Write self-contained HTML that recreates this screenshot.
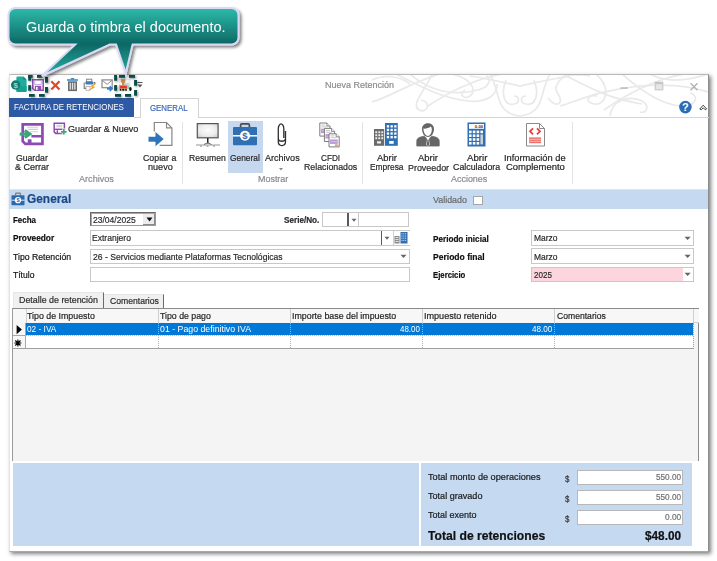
<!DOCTYPE html>
<html><head><meta charset="utf-8"><style>
html,body{margin:0;padding:0;}
body{width:717px;height:561px;position:relative;overflow:hidden;background:#fff;font-family:"Liberation Sans", sans-serif;}
.t{position:absolute;white-space:nowrap;line-height:1;transform-origin:0 0;-webkit-text-stroke:0.2px currentColor;}
svg{overflow:visible;}
</style></head><body>
<div style="position:absolute;left:9px;top:74px;width:700px;height:478px;background:#fff;box-shadow:2px 2px 4px rgba(0,0,0,.5);"></div>
<div style="position:absolute;left:9px;top:74px;width:700px;height:478px;border:1px solid #e4e4e4;border-top-color:#b8b8b8;border-right-color:#8c8c8c;border-bottom-color:#a8a8a8;box-sizing:border-box;"></div>
<div style="position:absolute;left:366px;top:75px;width:342px;height:42px;overflow:hidden;">
<svg style="position:absolute;left:-366px;top:-75px;" width="717" height="120" viewBox="0 0 717 120"><g fill="none" stroke="#e9e9e9" stroke-width="1.7"><path d="M372 102 C392 96 412 82 440 74"/><path d="M396 74 C420 86 440 98 468 101 C488 103 498 94 497 84"/><path d="M432 74 C426 90 410 104 419 110 C428 114 431 101 421 100"/><path d="M410 74 C430 92 455 96 478 90 C490 87 492 78 486 76"/><path d="M452 74 C470 78 478 90 470 96 C464 100 458 94 465 90"/><path d="M490 74 C501 92 494 113 520 116 C546 113 539 92 550 74"/><path d="M506 80 C500 95 505 106 514 104 C520 103 520 96 514 96"/><path d="M534 80 C540 95 535 106 526 104 C520 103 520 96 526 96"/><path d="M470 76 C495 80 510 84 520 86 C530 84 545 80 570 76"/><path d="M548 98 C556 108 562 104 560 98 C558 92 552 90 560 80 C566 74 580 74 590 76"/><path d="M560 106 C580 100 600 90 640 86 C665 84 690 86 708 92"/><path d="M596 74 C612 88 606 106 594 104 C584 102 588 94 597 96"/><path d="M622 74 C640 90 660 104 680 106 C696 107 700 96 690 93"/><path d="M650 74 C668 84 690 80 708 74"/><path d="M610 116 C612 100 628 96 640 100 C650 104 648 114 640 112"/><path d="M428 106 C446 94 470 80 502 74"/><path d="M562 74 C584 84 604 98 642 104"/><path d="M604 110 C624 96 652 80 684 74"/><path d="M372 80 C385 74 400 76 410 84"/></g></svg>
</div>
<svg style="position:absolute;left:10px;top:75px;" width="20" height="20" viewBox="0 0 20 20"><path d="M7.6 1.5h5.8l3.2 3.3v11a1.2 1.2 0 0 1-1.2 1.2H7.6a1.2 1.2 0 0 1-1.2-1.2V2.7a1.2 1.2 0 0 1 1.2-1.2z" fill="#1fac9c"/><path d="M6.4 11.2h10.2v4.6a1.2 1.2 0 0 1-1.2 1.2H7.6a1.2 1.2 0 0 1-1.2-1.2z" fill="#14a393"/><path d="M13.4 1.5v3.3h3.2z" fill="#0f8c7f"/><circle cx="5.65" cy="10" r="4.7" fill="#0f7d73"/><text x="5.65" y="12.9" font-size="8" font-weight="700" font-family="Liberation Sans" fill="#9ad6ce" text-anchor="middle">$</text></svg>
<svg style="position:absolute;left:32px;top:79px;" width="12" height="12" viewBox="0 0 12 12"><path d="M0.8 0.8h10.4v10.4H2.5L0.8 9.5z" fill="none" stroke="#8f52b5" stroke-width="1.6"/><rect x="2.8" y="1.6" width="6.4" height="3.8" fill="#fff" stroke="#b996cf" stroke-width=".8"/><rect x="2.8" y="6.8" width="6.5" height="4.2" fill="#8f52b5"/><rect x="4" y="8" width="1.6" height="2.8" fill="#fff"/></svg>
<svg style="position:absolute;left:50px;top:80px;" width="11" height="11" viewBox="0 0 11 11"><path d="M1.3 1.3L9.5 9.5M9.5 1.3L1.3 9.5" stroke="#dc4a2c" stroke-width="2.2"/></svg>
<svg style="position:absolute;left:66px;top:78px;" width="13" height="14" viewBox="0 0 13 14"><rect x="1" y="1.2" width="11" height="1.6" fill="#3d8fd1"/><rect x="4.8" y="0" width="3.4" height="1.6" fill="#3d8fd1"/><rect x="2" y="3.3" width="9" height="9.8" fill="#6b6b6b"/><rect x="3.6" y="4.8" width="1.3" height="6.8" fill="#e0e0e0"/><rect x="5.9" y="4.8" width="1.3" height="6.8" fill="#e0e0e0"/><rect x="8.2" y="4.8" width="1.3" height="6.8" fill="#e0e0e0"/></svg>
<svg style="position:absolute;left:83px;top:78px;" width="15" height="14" viewBox="0 0 15 14"><rect x="3.6" y="1.2" width="5.2" height="2.6" fill="#fff" stroke="#7a7a7a" stroke-width=".9"/><path d="M1.2 4.6V10.4H3.2M10.6 4.6H11.8V6.5" fill="none" stroke="#7a7a7a" stroke-width="1.1"/><rect x="2.4" y="3.4" width="8" height="3.1" rx="1" fill="#3a7cc4"/><rect x="3" y="8.6" width="4" height="3.6" fill="#fff" stroke="#a0a0a0" stroke-width=".7"/><path d="M13.6 4.6L6.8 8.6L9.3 9.1L4.8 13.6L12.4 9.1L10.1 8.6Z" fill="#f0a21e"/></svg>
<svg style="position:absolute;left:100px;top:78px;" width="15" height="15" viewBox="0 0 15 15"><rect x="2" y="1.9" width="10.2" height="7.8" fill="#fff" stroke="#8a8a8a" stroke-width="1.2"/><path d="M2.3 2.3 L7.1 6.4 L11.9 2.3" fill="none" stroke="#8a8a8a" stroke-width="1"/><path d="M7 10.6H11" stroke="#3a7fd0" stroke-width="2.2"/><path d="M10 8 L13 10.6 L10 13.2Z" fill="#3a7fd0" stroke="#3a7fd0" stroke-width="1"/></svg>
<svg style="position:absolute;left:118px;top:78px;" width="15" height="14" viewBox="0 0 15 14"><rect x="1.2" y="1.2" width="10.9" height="11.9" fill="#f3f3f3" stroke="#dadada" stroke-width=".6"/><path d="M2.8 1.2H7.3V4.5H6.5V7.5H4V4.5H2.8Z" fill="#c48b4c"/><rect x="7" y="5" width="4.2" height="2" fill="#bcd4ee"/><rect x="1.6" y="7.3" width="7.6" height="3.2" fill="#e2382e" stroke="#e9a062" stroke-width=".6"/><rect x="9.2" y="7.5" width="2.3" height="3.5" fill="#92d18f"/><path d="M1.8 11.8h1.6M4.2 11.8h2.2M7.2 11.8h1.6" stroke="#111" stroke-width="2"/><ellipse cx="12.4" cy="11" rx="1.3" ry="2" fill="#151515"/></svg>
<svg style="position:absolute;left:137px;top:82px;" width="6" height="6" viewBox="0 0 6 6"><rect x="0.5" y="0" width="5" height="1" fill="#555"/><path d="M0.5 2.5h5l-2.5 3z" fill="#555"/></svg>
<div class="t" style="left:324.50px;top:79.87px;font-size:9.6px;font-weight:400;color:#8c8c8c;transform:scaleX(0.9369);">Nueva Retención</div>
<svg style="position:absolute;left:618px;top:80px;" width="12" height="10" viewBox="0 0 12 10"><rect x="2.4" y="7.4" width="7.4" height="1.3" fill="#b0b0b0"/></svg>
<svg style="position:absolute;left:654px;top:81px;" width="10" height="10" viewBox="0 0 10 10"><rect x="1.2" y="1.2" width="7.6" height="7.6" fill="#e6e6e6" stroke="#c4c4c4" stroke-width="1"/><rect x="1.2" y="1.2" width="7.6" height="2" fill="#c4c4c4"/></svg>
<svg style="position:absolute;left:689px;top:82px;" width="10" height="10" viewBox="0 0 10 10"><path d="M1.5 1.2L8.5 8.2M8.5 1.2L1.5 8.2" stroke="#b0b0b0" stroke-width="1.3"/></svg>
<svg style="position:absolute;left:678px;top:100px;" width="15" height="15" viewBox="0 0 15 15"><circle cx="7.4" cy="7.1" r="6.3" fill="#2c6db5"/><text x="7.4" y="11.2" font-size="11" font-weight="700" font-family="Liberation Sans" fill="#fff" text-anchor="middle">?</text></svg>
<svg style="position:absolute;left:699px;top:103px;" width="9" height="8" viewBox="0 0 9 8"><path d="M0.8 6 L4.2 2.2 L7.6 6 L6.2 6.8 L4.2 4.8 L2.2 6.8z" fill="none" stroke="#444" stroke-width="1" stroke-linejoin="round"/></svg>
<div style="position:absolute;left:9px;top:98px;width:125px;height:19px;background:#2d59a5;"></div>
<div class="t" style="left:14.30px;top:103.01px;font-size:9.2px;font-weight:400;color:#fff;transform:scaleX(0.8677);-webkit-text-stroke:0;">FACTURA DE RETENCIONES</div>
<div style="position:absolute;left:134px;top:116.5px;width:575px;height:1px;background:#d4d4d4;"></div>
<div style="position:absolute;left:139.5px;top:98px;width:59.5px;height:20px;background:#fff;border:1px solid #d4d4d4;border-bottom:none;box-sizing:border-box;"></div>
<div class="t" style="left:150.00px;top:103.71px;font-size:9.2px;font-weight:400;color:#3d68b6;transform:scaleX(0.8551);">GENERAL</div>
<svg style="position:absolute;left:19px;top:121px;" width="27" height="27" viewBox="0 0 27 27"><path d="M3.7 3.35H23.45V22.85H6.3L3.7 20.3Z" fill="#fff" stroke="#8e4ab4" stroke-width="2.7"/><path d="M8 6.3h11M9.3 8.4h9.7M11 10.8h8" stroke="#cfcfcf" stroke-width="1.1"/><path d="M12.4 15.25H24" stroke="#8e4ab4" stroke-width="2.5"/><rect x="8.8" y="18.3" width="3.7" height="4.8" fill="#8e4ab4"/><path d="M0.7 13.1H9" stroke="#3aa57a" stroke-width="3"/><path d="M5.8 9.6L10.8 13.1L5.8 16.6" fill="none" stroke="#3aa57a" stroke-width="3" stroke-linejoin="miter"/></svg>
<div class="t" style="left:16.30px;top:152.87px;font-size:9.6px;font-weight:400;color:#262626;transform:scaleX(0.9029);">Guardar</div>
<div class="t" style="left:14.70px;top:162.37px;font-size:9.6px;font-weight:400;color:#262626;transform:scaleX(0.9401);">&amp; Cerrar</div>
<svg style="position:absolute;left:53px;top:122px;" width="14" height="13" viewBox="0 0 14 13"><path d="M1.2 1.2h10.2v10.2H2.6L1.2 10z" fill="#fff" stroke="#8e4ab4" stroke-width="1.5"/><rect x="3.4" y="2.8" width="5.8" height="2.6" fill="#d6d6d6"/><path d="M1.5 7.3H10.5" stroke="#8e4ab4" stroke-width="1.4"/><rect x="3.6" y="8.3" width="1.4" height="2.8" fill="#8e4ab4"/><path d="M10.8 6.6v6.4M7.6 9.8H14" stroke="#fff" stroke-width="3"/><path d="M10.8 7v5.6M8 9.8H13.6" stroke="#3aa57a" stroke-width="1.8"/></svg>
<div class="t" style="left:67.50px;top:123.87px;font-size:9.6px;font-weight:400;color:#262626;transform:scaleX(0.9424);">Guardar &amp; Nuevo</div>
<svg style="position:absolute;left:147px;top:121px;" width="27" height="27" viewBox="0 0 27 27"><path d="M7.3 10.5V1.5h12.2l5.4 5.4v17.4H12.6" fill="none" stroke="#858585" stroke-width="1.2"/><path d="M19.5 1.5v5.4h5.4" fill="none" stroke="#858585" stroke-width="1.1"/><path d="M1.2 15.4H8.2V10.4L17.1 18L8.2 25.8V21H1.2Z" fill="#2e74bb" stroke="#fff" stroke-width=".6"/></svg>
<div class="t" style="left:142.90px;top:152.57px;font-size:9.6px;font-weight:400;color:#262626;transform:scaleX(0.9177);">Copiar a</div>
<div class="t" style="left:148.00px;top:162.37px;font-size:9.6px;font-weight:400;color:#262626;transform:scaleX(0.9481);">nuevo</div>
<div class="t" style="left:78.90px;top:174.37px;font-size:9.6px;font-weight:400;color:#8a8a8a;transform:scaleX(0.9481);">Archivos</div>
<div style="position:absolute;left:182px;top:122px;width:1px;height:62px;background:#e3e3e3;"></div>
<svg style="position:absolute;left:195px;top:121px;" width="26" height="27" viewBox="0 0 26 27"><defs><radialGradient id="mg" cx=".5" cy=".45" r=".7"><stop offset="0" stop-color="#fdfdfd"/><stop offset=".6" stop-color="#ececec"/><stop offset="1" stop-color="#c8c8c8"/></radialGradient></defs><rect x="2.3" y="2.6" width="20.8" height="14.2" fill="url(#mg)" stroke="#555" stroke-width="1.2"/><rect x="12" y="17" width="1.5" height="5.5" fill="#222"/><path d="M1 24h24" stroke="#a8a8a8" stroke-width="1.2"/><path d="M9 23.5l3.7-1.8 3.7 1.8" fill="none" stroke="#666" stroke-width="1"/><path d="M5 25.2h2M11.5 25.2h2M18 25.2h2" stroke="#888" stroke-width=".9"/></svg>
<div class="t" style="left:188.90px;top:152.57px;font-size:9.6px;font-weight:400;color:#262626;transform:scaleX(0.8957);">Resumen</div>
<div style="position:absolute;left:228.3px;top:120.8px;width:34.5px;height:52.5px;background:#c5d8ef;"></div>
<svg style="position:absolute;left:232px;top:122px;" width="26" height="25" viewBox="0 0 26 25"><path d="M8.6 5V3.2Q8.6 1.8 10 1.8H16Q17.4 1.8 17.4 3.2V5" fill="none" stroke="#4d4d4d" stroke-width="1.7"/><rect x="1" y="5" width="24" height="18.3" rx="1" fill="#2f6fb3"/><path d="M1 13.8h24" stroke="#fff" stroke-width="1.5"/><circle cx="13" cy="13.8" r="5" fill="#fff"/><text x="13" y="17.2" font-size="9.5" font-weight="700" font-family="Liberation Sans" fill="#2f6fb3" text-anchor="middle">$</text></svg>
<div class="t" style="left:230.30px;top:152.57px;font-size:9.6px;font-weight:400;color:#262626;transform:scaleX(0.8725);">General</div>
<svg style="position:absolute;left:276px;top:122px;" width="11" height="26" viewBox="0 0 11 26"><g fill="none" stroke="#2e2e2e" stroke-width="1.3"><path d="M7.8 16 V6.5 C7.8 3.6 6.2 1.8 5.1 1.8 C4 1.8 2.3 3.6 2.3 6.5 V19.6 C2.3 22.1 3.9 23.6 5.8 23.6 C7.7 23.6 9.5 22.1 9.5 19.6 V9"/><path d="M2.4 17.6 C3.6 19.8 8 19.8 9.3 17.6"/></g></svg>
<div class="t" style="left:264.90px;top:152.57px;font-size:9.6px;font-weight:400;color:#262626;transform:scaleX(0.9426);">Archivos</div>
<svg style="position:absolute;left:278px;top:167px;" width="6" height="4" viewBox="0 0 6 4"><path d="M1 1h4l-2 2.5z" fill="#888"/></svg>
<svg style="position:absolute;left:318px;top:121px;" width="24" height="27" viewBox="0 0 24 27"><g transform="translate(1.3,1.5)"><path d="M0.5 0.5h7.2l3 3v10.1h-10.2z" fill="#fff" stroke="#7c7c7c" stroke-width="1"/><path d="M7.7 0.5v3h3" fill="#fff" stroke="#7c7c7c" stroke-width=".9"/><path d="M2 2.6h4M2 4.4h6" stroke="#b0b0b0" stroke-width=".7"/><rect x="1.6" y="6.2" width="7.6" height="4.4" fill="#b797d6"/><path d="M2.4 8.4h6" stroke="#e6dcf2" stroke-width=".6"/></g><g transform="translate(5.8999999999999995,6.9)"><path d="M0.5 0.5h7.2l3 3v10.1h-10.2z" fill="#fff" stroke="#7c7c7c" stroke-width="1"/><path d="M7.7 0.5v3h3" fill="#fff" stroke="#7c7c7c" stroke-width=".9"/><path d="M2 2.6h4M2 4.4h6" stroke="#b0b0b0" stroke-width=".7"/><rect x="1.6" y="6.2" width="7.6" height="4.4" fill="#b797d6"/><path d="M2.4 8.4h6" stroke="#e6dcf2" stroke-width=".6"/></g><g transform="translate(10.5,12.3)"><path d="M0.5 0.5h7.2l3 3v10.1h-10.2z" fill="#fff" stroke="#7c7c7c" stroke-width="1"/><path d="M7.7 0.5v3h3" fill="#fff" stroke="#7c7c7c" stroke-width=".9"/><path d="M2 2.6h4M2 4.4h6" stroke="#b0b0b0" stroke-width=".7"/><rect x="1.6" y="6.2" width="7.6" height="4.4" fill="#b797d6"/><path d="M2.4 8.4h6" stroke="#e6dcf2" stroke-width=".6"/><rect x="6.4" y="11" width="3" height="1.8" fill="#ef9a7a"/></g></svg>
<div class="t" style="left:321.00px;top:152.57px;font-size:9.6px;font-weight:400;color:#262626;transform:scaleX(0.8528);">CFDI</div>
<div class="t" style="left:303.70px;top:162.37px;font-size:9.6px;font-weight:400;color:#262626;transform:scaleX(0.9162);">Relacionados</div>
<div class="t" style="left:257.90px;top:174.37px;font-size:9.6px;font-weight:400;color:#8a8a8a;transform:scaleX(0.9312);">Mostrar</div>
<div style="position:absolute;left:362px;top:122px;width:1px;height:62px;background:#e3e3e3;"></div>
<svg style="position:absolute;left:374.2px;top:123px;" width="25" height="23" viewBox="0 0 25 23"><rect x="0" y="6" width="10.2" height="16.8" fill="#6b6b6b"/><rect x="11" y="0" width="12.8" height="22.8" fill="#2f6fb3"/><rect x="1.3" y="8.3" width="1.9" height="1.9" fill="#eee"/><rect x="4.3" y="8.3" width="1.9" height="1.9" fill="#eee"/><rect x="7.3" y="8.3" width="1.9" height="1.9" fill="#eee"/><rect x="1.3" y="11.3" width="1.9" height="1.9" fill="#eee"/><rect x="4.3" y="11.3" width="1.9" height="1.9" fill="#eee"/><rect x="7.3" y="11.3" width="1.9" height="1.9" fill="#eee"/><rect x="1.3" y="14.3" width="1.9" height="1.9" fill="#eee"/><rect x="4.3" y="14.3" width="1.9" height="1.9" fill="#eee"/><rect x="7.3" y="14.3" width="1.9" height="1.9" fill="#eee"/><rect x="3" y="18.3" width="4" height="2.2" fill="#eee"/><rect x="12.8" y="2.2" width="2.3" height="2.3" fill="#fff"/><rect x="16.5" y="2.2" width="2.3" height="2.3" fill="#fff"/><rect x="20.2" y="2.2" width="2.3" height="2.3" fill="#fff"/><rect x="12.8" y="5.8" width="2.3" height="2.3" fill="#fff"/><rect x="16.5" y="5.8" width="2.3" height="2.3" fill="#fff"/><rect x="20.2" y="5.8" width="2.3" height="2.3" fill="#fff"/><rect x="12.8" y="9.4" width="2.3" height="2.3" fill="#fff"/><rect x="16.5" y="9.4" width="2.3" height="2.3" fill="#fff"/><rect x="20.2" y="9.4" width="2.3" height="2.3" fill="#fff"/><rect x="12.8" y="13.0" width="2.3" height="2.3" fill="#fff"/><rect x="16.5" y="13.0" width="2.3" height="2.3" fill="#fff"/><rect x="20.2" y="13.0" width="2.3" height="2.3" fill="#fff"/><rect x="15.2" y="18" width="4.5" height="2.8" fill="#fff"/></svg>
<div class="t" style="left:376.90px;top:152.57px;font-size:9.6px;font-weight:400;color:#262626;transform:scaleX(0.9817);">Abrir</div>
<div class="t" style="left:369.50px;top:162.37px;font-size:9.6px;font-weight:400;color:#262626;transform:scaleX(0.8720);">Empresa</div>
<svg style="position:absolute;left:415px;top:122px;" width="26" height="25" viewBox="0 0 26 25"><path d="M1.8 24V19.2C1.8 16.4 3.6 15.3 9 14.2L13 17.6L17 14.2C22.4 15.3 24.2 16.4 24.2 19.2V24Z" fill="#666" stroke="#666" stroke-width=".8" stroke-linejoin="round"/><path d="M11.6 15.8h2.8l-.4 1.5.8 6h-3.6l.8-6z" fill="#fff"/><path d="M12.4 17.6h1.2l.6 5.5h-2.4z" fill="#666"/><path d="M13 1.3c-3.8 0-6 2.4-6 5.8 0 4.4 2.7 8 6 8s6-3.6 6-8c0-3.4-2.2-5.8-6-5.8z" fill="#666"/><path d="M8.4 6.6c1.8.4 5.5-.3 7.4-2 .8 1 1 1.8 1 3.1 0 3.2-1.8 6.2-3.8 6.2S9 11.2 8.6 8.5z" fill="#fff"/></svg>
<div class="t" style="left:418.00px;top:152.57px;font-size:9.6px;font-weight:400;color:#262626;transform:scaleX(0.9867);">Abrir</div>
<div class="t" style="left:407.60px;top:163.17px;font-size:9.6px;font-weight:400;color:#262626;transform:scaleX(0.9279);">Proveedor</div>
<svg style="position:absolute;left:467px;top:122px;" width="19" height="25" viewBox="0 0 19 25"><rect x="0.5" y="0.5" width="18" height="24" fill="#2f6fb3"/><rect x="2" y="2" width="15" height="4.8" fill="#fff"/><text x="16.2" y="6" font-size="4.3" font-weight="700" font-family="Liberation Sans" fill="#333" text-anchor="end">0.00</text><rect x="2.0" y="8.6" width="2.6" height="2.6" fill="#fff"/><rect x="5.8" y="8.6" width="2.6" height="2.6" fill="#fff"/><rect x="9.6" y="8.6" width="2.6" height="2.6" fill="#fff"/><rect x="13.4" y="8.6" width="2.6" height="2.6" fill="#fff"/><rect x="2.0" y="12.4" width="2.6" height="2.6" fill="#fff"/><rect x="5.8" y="12.4" width="2.6" height="2.6" fill="#fff"/><rect x="9.6" y="12.4" width="2.6" height="2.6" fill="#fff"/><rect x="2.0" y="16.2" width="2.6" height="2.6" fill="#fff"/><rect x="5.8" y="16.2" width="2.6" height="2.6" fill="#fff"/><rect x="9.6" y="16.2" width="2.6" height="2.6" fill="#fff"/><rect x="2.0" y="20.0" width="2.6" height="2.6" fill="#fff"/><rect x="5.8" y="20.0" width="2.6" height="2.6" fill="#fff"/><rect x="9.6" y="20.0" width="2.6" height="2.6" fill="#fff"/><rect x="13.4" y="12.4" width="2.6" height="10" fill="#cfcfcf"/></svg>
<div class="t" style="left:466.70px;top:152.57px;font-size:9.6px;font-weight:400;color:#262626;transform:scaleX(1.0113);">Abrir</div>
<div class="t" style="left:452.70px;top:162.37px;font-size:9.6px;font-weight:400;color:#262626;transform:scaleX(0.9213);">Calculadora</div>
<svg style="position:absolute;left:525px;top:122px;" width="21" height="25" viewBox="0 0 21 25"><path d="M1.5 1.5h13l5 5v17.5h-18z" fill="#fff" stroke="#8a8a8a" stroke-width="1"/><path d="M14.5 1.5v5h5" fill="none" stroke="#8a8a8a" stroke-width="1"/><path d="M8 6.3L5 9.3L8 12.3M12 6.3L15 9.3L12 12.3" fill="none" stroke="#e8413c" stroke-width="1.8"/><rect x="4" y="15.4" width="12" height="5.8" fill="#ef6f6b"/><path d="M4 17.3h12M4 19.3h12" stroke="#fbd0cf" stroke-width=".8"/></svg>
<div class="t" style="left:504.40px;top:152.57px;font-size:9.6px;font-weight:400;color:#262626;transform:scaleX(0.9700);">Información de</div>
<div class="t" style="left:505.80px;top:162.37px;font-size:9.6px;font-weight:400;color:#262626;transform:scaleX(0.9839);">Complemento</div>
<div class="t" style="left:450.90px;top:174.37px;font-size:9.6px;font-weight:400;color:#8a8a8a;transform:scaleX(0.9319);">Acciones</div>
<div style="position:absolute;left:571.5px;top:122px;width:1px;height:62px;background:#e3e3e3;"></div>
<div style="position:absolute;left:9px;top:188.5px;width:699px;height:1px;background:#e4e4e4;"></div>
<div style="position:absolute;left:9px;top:189.5px;width:699px;height:19.5px;background:#c5d9f0;"></div>
<svg style="position:absolute;left:11px;top:192px;" width="14" height="14" viewBox="0 0 14 14"><path d="M4.6 3.2V2Q4.6 1.2 5.4 1.2H8.6Q9.4 1.2 9.4 2V3.2" fill="none" stroke="#7a7a7a" stroke-width="1.2"/><rect x="0.5" y="3.2" width="13" height="10" rx=".8" fill="#2b69ad"/><path d="M0.5 8.2h13" stroke="#d8e6f5" stroke-width="1"/><circle cx="7" cy="8.2" r="3.1" fill="#fff"/><text x="7" y="10.4" font-size="5.6" font-weight="700" font-family="Liberation Sans" fill="#2b69ad" text-anchor="middle">$</text></svg>
<div class="t" style="left:26.80px;top:192.96px;font-size:12.8px;font-weight:700;color:#1b4887;transform:scaleX(0.9293);">General</div>
<div class="t" style="left:433.40px;top:195.07px;font-size:9.6px;font-weight:400;color:#6a6a6a;transform:scaleX(0.9249);">Validado</div>
<div style="position:absolute;left:473px;top:195.8px;width:10px;height:9px;background:#fff;border:1px solid #a6a6a6;box-sizing:border-box;"></div>
<div class="t" style="left:13.10px;top:216.38px;font-size:9px;font-weight:700;color:#101010;transform:scaleX(0.8842);">Fecha</div>
<div class="t" style="left:13.10px;top:233.78px;font-size:9px;font-weight:700;color:#101010;transform:scaleX(0.9255);">Proveedor</div>
<div class="t" style="left:13.20px;top:252.17px;font-size:9.6px;font-weight:400;color:#101010;transform:scaleX(0.9048);">Tipo Retención</div>
<div class="t" style="left:13.20px;top:270.27px;font-size:9.6px;font-weight:400;color:#101010;transform:scaleX(0.8913);">Título</div>
<div style="position:absolute;left:89.7px;top:212.2px;width:66.4px;height:14px;background:#fff;border:1px solid #6a6a6a;border-right-color:#9a9a9a;border-bottom-color:#9a9a9a;box-shadow:inset 1px 1px 0 #a8a8a8;box-sizing:border-box;"></div>
<div style="position:absolute;left:143px;top:213.5px;width:12px;height:11.5px;background:#ececec;border-right:1px solid #8a8a8a;border-bottom:1px solid #8a8a8a;box-sizing:border-box;"></div>
<svg style="position:absolute;left:145.5px;top:217px;" width="7" height="5" viewBox="0 0 7 5"><path d="M0.5 0.5h6l-3 4z" fill="#111"/></svg>
<div class="t" style="left:92.50px;top:215.07px;font-size:9.6px;font-weight:400;color:#2a2a2a;transform:scaleX(0.8887);">23/04/2025</div>
<div style="position:absolute;left:89.7px;top:230px;width:320px;height:15.6px;background:#fff;border:1px solid #c8c8c8;box-sizing:border-box;"></div>
<div style="position:absolute;left:380.8px;top:231px;width:1.5px;height:13.6px;background:#5a5a5a;"></div>
<svg style="position:absolute;left:384px;top:236.3px;" width="6" height="5" viewBox="0 0 6 5"><path d="M0.5 0.8h5l-2.5 3z" fill="#666"/></svg>
<div style="position:absolute;left:392.5px;top:231px;width:17px;height:14px;background:#fff;border-left:1px solid #d0d0d0;box-sizing:border-box;"></div>
<svg style="position:absolute;left:394px;top:232px;" width="14" height="12" viewBox="0 0 14 12"><rect x="0.5" y="4" width="5" height="7.5" fill="#8a8a8a"/><path d="M1.5 5.5h3M1.5 7.5h3M1.5 9.5h3" stroke="#eee" stroke-width=".9"/><rect x="6.5" y="0" width="7" height="11.5" fill="#2f6fb3"/><path d="M7.5 1.8h5M7.5 4h5M7.5 6.2h5M7.5 8.4h5" stroke="#fff" stroke-width=".8" stroke-dasharray="1 .8"/></svg>
<div class="t" style="left:92.00px;top:233.27px;font-size:9.6px;font-weight:400;color:#2a2a2a;transform:scaleX(0.8913);">Extranjero</div>
<div style="position:absolute;left:89.7px;top:248.5px;width:320px;height:15.2px;background:#fff;border:1px solid #c8c8c8;box-sizing:border-box;"></div>
<svg style="position:absolute;left:400px;top:253.5px;" width="8" height="5" viewBox="0 0 8 5"><path d="M0.5 0.8h6l-3 3.1z" fill="#666"/></svg>
<div class="t" style="left:92.50px;top:252.17px;font-size:9.6px;font-weight:400;color:#2a2a2a;transform:scaleX(0.8944);">26 - Servicios mediante Plataformas Tecnológicas</div>
<div style="position:absolute;left:89.7px;top:267px;width:320px;height:14.5px;background:#fff;border:1px solid #c8c8c8;box-sizing:border-box;"></div>
<div class="t" style="left:283.80px;top:216.38px;font-size:9px;font-weight:700;color:#2a2a2a;transform:scaleX(0.9048);">Serie/No.</div>
<div style="position:absolute;left:321.8px;top:212.4px;width:37px;height:15px;background:#fff;border:1px solid #c8c8c8;box-sizing:border-box;"></div>
<div style="position:absolute;left:347.3px;top:213.4px;width:1.5px;height:13px;background:#5a5a5a;"></div>
<svg style="position:absolute;left:350.5px;top:218px;" width="6" height="5" viewBox="0 0 6 5"><path d="M0.5 0.8h5l-2.5 3z" fill="#666"/></svg>
<div style="position:absolute;left:358px;top:212.4px;width:51px;height:15px;background:#fff;border:1px solid #c8c8c8;box-sizing:border-box;"></div>
<div class="t" style="left:433.00px;top:234.78px;font-size:9px;font-weight:700;color:#101010;transform:scaleX(0.9055);">Periodo inicial</div>
<div class="t" style="left:433.00px;top:253.08px;font-size:9px;font-weight:700;color:#101010;transform:scaleX(0.9485);">Periodo final</div>
<div class="t" style="left:433.00px;top:270.88px;font-size:9px;font-weight:700;color:#101010;transform:scaleX(0.8609);">Ejercicio</div>
<div style="position:absolute;left:531.2px;top:230px;width:162.6px;height:15.6px;background:#fff;border:1px solid #c8c8c8;box-sizing:border-box;"></div>
<svg style="position:absolute;left:684px;top:235.5px;" width="8" height="5" viewBox="0 0 8 5"><path d="M0.5 0.8h6.2l-3.1 3.2z" fill="#666"/></svg>
<div class="t" style="left:533.80px;top:233.27px;font-size:9.6px;font-weight:400;color:#2a2a2a;transform:scaleX(0.8810);">Marzo</div>
<div style="position:absolute;left:531.2px;top:248.3px;width:162.6px;height:15.6px;background:#fff;border:1px solid #c8c8c8;box-sizing:border-box;"></div>
<svg style="position:absolute;left:684px;top:253.8px;" width="8" height="5" viewBox="0 0 8 5"><path d="M0.5 0.8h6.2l-3.1 3.2z" fill="#666"/></svg>
<div class="t" style="left:533.80px;top:251.57px;font-size:9.6px;font-weight:400;color:#2a2a2a;transform:scaleX(0.8810);">Marzo</div>
<div style="position:absolute;left:531.2px;top:266.6px;width:162.6px;height:15.6px;background:#fff;border:1px solid #c8c8c8;box-sizing:border-box;"></div>
<div style="position:absolute;left:532.2px;top:267.6px;width:151px;height:13.6px;background:#fdd5df;"></div>
<svg style="position:absolute;left:684px;top:272.1px;" width="8" height="5" viewBox="0 0 8 5"><path d="M0.5 0.8h6.2l-3.1 3.2z" fill="#666"/></svg>
<div class="t" style="left:533.80px;top:269.87px;font-size:9.6px;font-weight:400;color:#2a2a2a;transform:scaleX(0.8381);">2025</div>
<div style="position:absolute;left:11.5px;top:307.5px;width:687.5px;height:153.5px;background:#f4f4f4;border-left:1.5px solid #9a9a9a;border-top:1px solid #9a9a9a;border-right:1px solid #8a8a8a;box-sizing:border-box;"></div>
<div style="position:absolute;left:12.5px;top:292px;width:91.5px;height:16px;background:#f0f0f0;border-left:1px solid #e6e6e6;border-top:1px solid #e6e6e6;border-right:1.5px solid #6a6a6a;box-sizing:border-box;"></div>
<div class="t" style="left:18.70px;top:295.37px;font-size:9.6px;font-weight:400;color:#2a2a2a;transform:scaleX(0.9240);">Detalle de retención</div>
<div style="position:absolute;left:104px;top:294px;width:60px;height:14px;background:#f0f0f0;border-top:1px solid #e6e6e6;border-right:1.5px solid #6a6a6a;box-sizing:border-box;"></div>
<div class="t" style="left:110.40px;top:295.87px;font-size:9.6px;font-weight:400;color:#2a2a2a;transform:scaleX(0.8985);">Comentarios</div>
<div style="position:absolute;left:12.5px;top:308.3px;width:686px;height:14.2px;background:#f7f7f7;border-top:1px solid #8a8a8a;box-sizing:border-box;"></div>
<div style="position:absolute;left:25.8px;top:309px;width:1px;height:13.5px;background:#cfcfcf;"></div>
<div style="position:absolute;left:157.8px;top:309px;width:1px;height:13.5px;background:#cfcfcf;"></div>
<div style="position:absolute;left:290.2px;top:309px;width:1px;height:13.5px;background:#cfcfcf;"></div>
<div style="position:absolute;left:422.4px;top:309px;width:1px;height:13.5px;background:#cfcfcf;"></div>
<div style="position:absolute;left:554.3px;top:309px;width:1px;height:13.5px;background:#cfcfcf;"></div>
<div style="position:absolute;left:692.6px;top:309px;width:1px;height:13.5px;background:#cfcfcf;"></div>
<div class="t" style="left:27.40px;top:310.57px;font-size:9.6px;font-weight:400;color:#1e1e1e;transform:scaleX(0.9198);">Tipo de Impuesto</div>
<div class="t" style="left:159.90px;top:310.57px;font-size:9.6px;font-weight:400;color:#1e1e1e;transform:scaleX(0.9140);">Tipo de pago</div>
<div class="t" style="left:291.80px;top:310.57px;font-size:9.6px;font-weight:400;color:#1e1e1e;transform:scaleX(0.9219);">Importe base del impuesto</div>
<div class="t" style="left:423.90px;top:310.57px;font-size:9.6px;font-weight:400;color:#1e1e1e;transform:scaleX(0.9447);">Impuesto retenido</div>
<div class="t" style="left:556.70px;top:310.57px;font-size:9.6px;font-weight:400;color:#1e1e1e;transform:scaleX(0.8967);">Comentarios</div>
<div style="position:absolute;left:12.5px;top:322.5px;width:13.3px;height:26px;background:#f7f7f7;border-right:1px solid #a8a8a8;box-sizing:border-box;"></div>
<div style="position:absolute;left:12.5px;top:335.3px;width:13.3px;height:1px;background:#a8a8a8;"></div>
<div style="position:absolute;left:12.5px;top:348.1px;width:681px;height:1px;background:#a0a0a0;"></div>
<svg style="position:absolute;left:14px;top:324px;" width="10" height="12" viewBox="0 0 10 12"><path d="M2.6 1.1L7.9 5.6L2.6 10.2z" fill="#000"/></svg>
<svg style="position:absolute;left:14px;top:339px;" width="8" height="8" viewBox="0 0 8 8"><path d="M3.9 0.6v6.8M0.4 4h7M1.3 1.5l5.2 5M6.5 1.5l-5.2 5" stroke="#000" stroke-width="1.1"/><circle cx="3.9" cy="4" r="1" fill="#000"/></svg>
<div style="position:absolute;left:25.8px;top:322.5px;width:666.8px;height:12.8px;background:#0078d7;"></div>
<div style="position:absolute;left:25.8px;top:335.3px;width:666.8px;height:12.8px;background:#fff;"></div>
<div style="position:absolute;left:25.8px;top:334.5px;width:666.8px;height:1px;border-bottom:1px dotted #9cc4ea;box-sizing:border-box;"></div>
<div style="position:absolute;left:157.8px;top:322.5px;width:1px;height:25.6px;border-left:1px dotted #95b9dd;box-sizing:border-box;"></div>
<div style="position:absolute;left:290.2px;top:322.5px;width:1px;height:25.6px;border-left:1px dotted #95b9dd;box-sizing:border-box;"></div>
<div style="position:absolute;left:422.4px;top:322.5px;width:1px;height:25.6px;border-left:1px dotted #95b9dd;box-sizing:border-box;"></div>
<div style="position:absolute;left:554.3px;top:322.5px;width:1px;height:25.6px;border-left:1px dotted #95b9dd;box-sizing:border-box;"></div>
<div style="position:absolute;left:692.6px;top:322.5px;width:1px;height:26px;border-left:1px dotted #7fa6cf;box-sizing:border-box;"></div>
<div style="position:absolute;left:692.6px;top:322px;width:6px;height:1px;background:#cfcfcf;"></div>
<div class="t" style="left:27.40px;top:323.97px;font-size:9.6px;font-weight:400;color:#fff;transform:scaleX(0.8654);-webkit-text-stroke:0;">02 - IVA</div>
<div class="t" style="left:159.90px;top:323.97px;font-size:9.6px;font-weight:400;color:#fff;transform:scaleX(0.9145);-webkit-text-stroke:0;">01 - Pago definitivo IVA</div>
<div class="t" style="left:399.90px;top:323.97px;font-size:9.6px;font-weight:400;color:#fff;transform:scaleX(0.8283);-webkit-text-stroke:0;">48.00</div>
<div class="t" style="left:531.70px;top:323.97px;font-size:9.6px;font-weight:400;color:#fff;transform:scaleX(0.8450);-webkit-text-stroke:0;">48.00</div>
<div style="position:absolute;left:13px;top:463.3px;width:405.8px;height:83px;background:#c5d9f0;"></div>
<div style="position:absolute;left:421.1px;top:463.3px;width:271px;height:83px;background:#c5d9f0;"></div>
<div class="t" style="left:427.80px;top:472.27px;font-size:9.6px;font-weight:400;color:#1a1a1a;transform:scaleX(0.9547);">Total monto de operaciones</div>
<div class="t" style="left:427.80px;top:490.77px;font-size:9.6px;font-weight:400;color:#1a1a1a;transform:scaleX(0.9455);">Total gravado</div>
<div class="t" style="left:427.80px;top:510.17px;font-size:9.6px;font-weight:400;color:#1a1a1a;transform:scaleX(0.9388);">Total exento</div>
<div class="t" style="left:564.80px;top:474.07px;font-size:9.6px;font-weight:400;color:#333;transform:scaleX(0.8241);">$</div>
<div style="position:absolute;left:577.1px;top:469.9px;width:105.5px;height:15.3px;background:#fff;border:1px solid #b8b8b8;box-sizing:border-box;"></div>
<div class="t" style="left:655.90px;top:472.27px;font-size:9.6px;font-weight:400;color:#6e6e6e;transform:scaleX(0.8514);">550.00</div>
<div class="t" style="left:564.80px;top:493.77px;font-size:9.6px;font-weight:400;color:#333;transform:scaleX(0.8241);">$</div>
<div style="position:absolute;left:577.1px;top:489.6px;width:105.5px;height:15.3px;background:#fff;border:1px solid #b8b8b8;box-sizing:border-box;"></div>
<div class="t" style="left:655.90px;top:491.97px;font-size:9.6px;font-weight:400;color:#6e6e6e;transform:scaleX(0.8514);">550.00</div>
<div class="t" style="left:564.80px;top:513.87px;font-size:9.6px;font-weight:400;color:#333;transform:scaleX(0.8241);">$</div>
<div style="position:absolute;left:577.1px;top:509.7px;width:105.5px;height:15.3px;background:#fff;border:1px solid #b8b8b8;box-sizing:border-box;"></div>
<div class="t" style="left:664.70px;top:512.07px;font-size:9.6px;font-weight:400;color:#6e6e6e;transform:scaleX(0.8670);">0.00</div>
<div class="t" style="left:427.80px;top:529.97px;font-size:12.2px;font-weight:700;color:#111;transform:scaleX(0.9963);">Total de retenciones</div>
<div class="t" style="left:645.40px;top:529.67px;font-size:12.2px;font-weight:700;color:#111;transform:scaleX(0.9674);">$48.00</div>
<svg style="position:absolute;left:0px;top:0px;filter:drop-shadow(1.5px 1.5px 1.2px rgba(0,0,0,.45));pointer-events:none;" width="717" height="120" viewBox="0 0 717 120"><rect x="28.2" y="75" width="4.50" height="2.80" fill="#0a4c48"/><rect x="28.2" y="75" width="2.80" height="5.70" fill="#0a4c48"/><rect x="37" y="75" width="5.50" height="2.80" fill="#0a4c48"/><rect x="45" y="77" width="3.00" height="5.70" fill="#0a4c48"/><rect x="28.2" y="85.2" width="2.80" height="5.50" fill="#0a4c48"/><rect x="45" y="87" width="3.00" height="5.70" fill="#0a4c48"/><rect x="29" y="94" width="5.70" height="2.80" fill="#0a4c48"/><rect x="39" y="94" width="5.70" height="2.80" fill="#0a4c48"/></svg>
<svg style="position:absolute;left:0px;top:0px;filter:drop-shadow(1.5px 1.5px 1.2px rgba(0,0,0,.45));pointer-events:none;" width="717" height="120" viewBox="0 0 717 120"><rect x="114.1" y="75" width="2.90" height="5.70" fill="#0a4c48"/><rect x="119" y="75" width="6.00" height="2.80" fill="#0a4c48"/><rect x="129" y="75" width="6.00" height="2.80" fill="#0a4c48"/><rect x="134.1" y="80" width="2.90" height="5.70" fill="#0a4c48"/><rect x="114.1" y="85.1" width="2.90" height="5.60" fill="#0a4c48"/><rect x="134.1" y="90" width="2.90" height="5.70" fill="#0a4c48"/><rect x="115" y="94" width="6.00" height="2.80" fill="#0a4c48"/><rect x="125" y="94" width="6.00" height="2.80" fill="#0a4c48"/></svg>
<svg style="position:absolute;left:0px;top:0px;" width="250" height="80" viewBox="0 0 250 80"><defs><linearGradient id="tg" gradientUnits="userSpaceOnUse" x1="0" y1="9" x2="0" y2="44" spreadMethod="reflect"><stop offset="0" stop-color="#2cb9a9"/><stop offset="1" stop-color="#0c6864"/></linearGradient><filter id="sh" x="-10%" y="-10%" width="130%" height="140%"><feDropShadow dx="2" dy="2" stdDeviation="1.4" flood-color="#000" flood-opacity=".5"/></filter></defs><path d="M15.5 8 H231.5 A7 7 0 0 1 238.5 15 V37.5 A7 7 0 0 1 231.5 44.5 H132.6 L125.8 73.2 L116.1 44.5 H109.8 L41.7 76 L75.2 44.5 H15.5 A7 7 0 0 1 8.5 37.5 V15 A7 7 0 0 1 15.5 8 Z" fill="url(#tg)" stroke="#dadaf7" stroke-width="2" filter="url(#sh)"/></svg>
<div class="t" style="left:25.70px;top:18.76px;font-size:15.4px;font-weight:400;color:#fff;transform:scaleX(0.9402);-webkit-text-stroke:0;">Guarda o timbra el documento.</div>
</body></html>
